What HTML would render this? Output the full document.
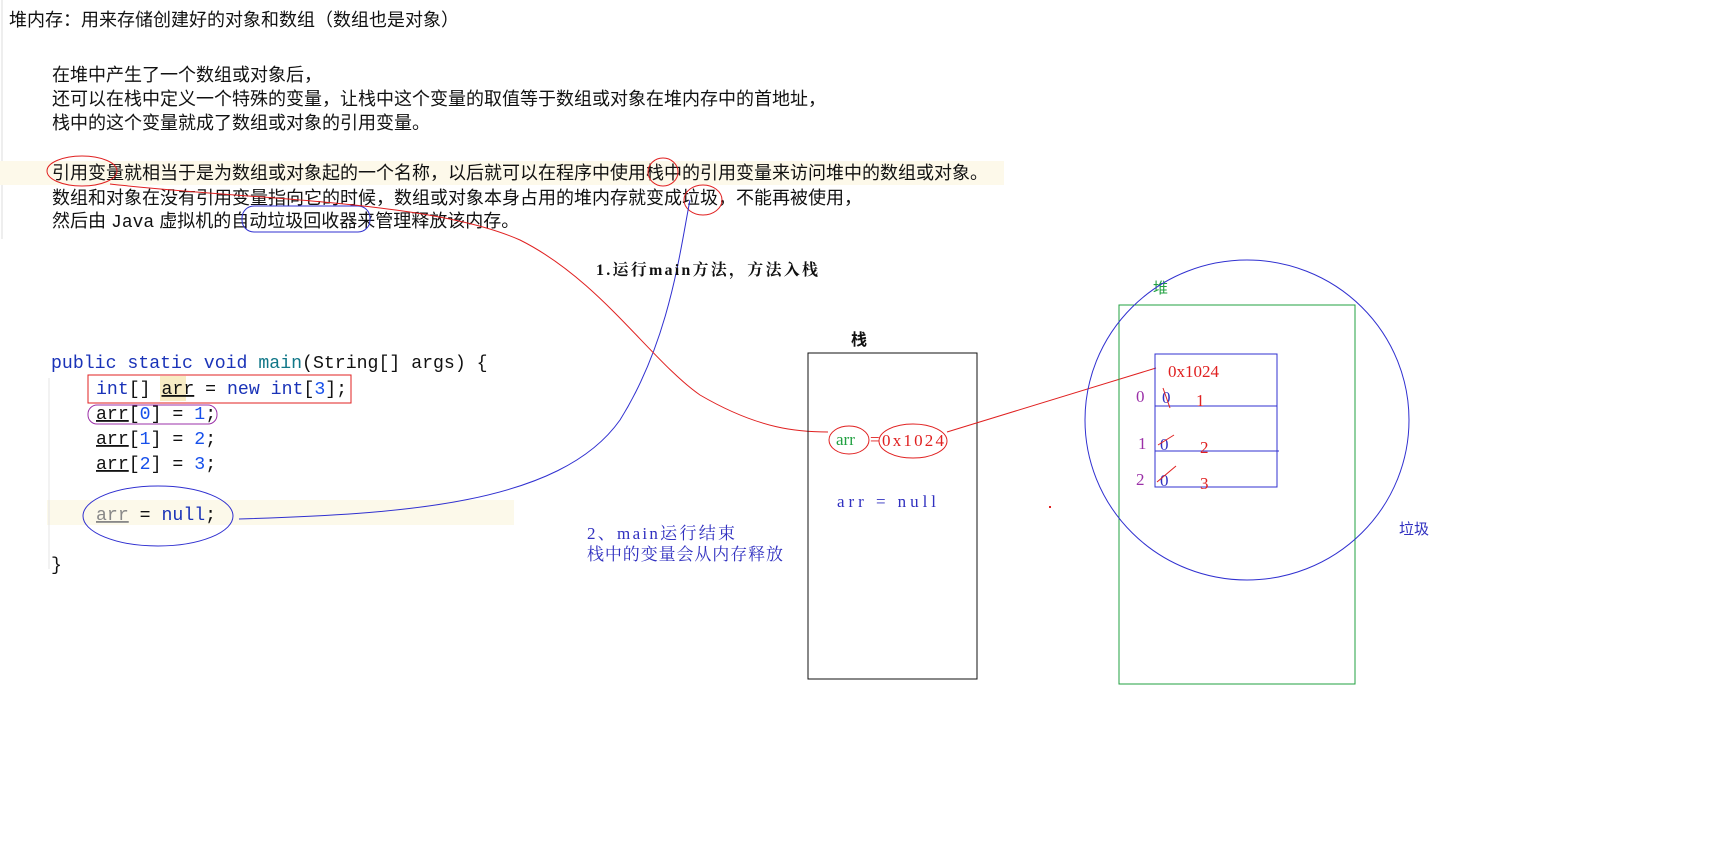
<!DOCTYPE html>
<html><head><meta charset="utf-8"><style>
html,body{margin:0;padding:0;background:#fff;width:1736px;height:851px;overflow:hidden}
svg{display:block}
.cn{font-family:"Liberation Sans","Noto Sans CJK SC",sans-serif;font-size:18px;fill:#111}
.mono{font-family:"Liberation Mono","DejaVu Sans Mono",monospace;font-size:18.2px}
.sf{font-family:"Liberation Serif","Noto Serif CJK SC",serif;font-size:17px}
</style></head><body>
<svg width="1736" height="851" viewBox="0 0 1736 851" xmlns="http://www.w3.org/2000/svg">
<line x1="2" y1="0" x2="2" y2="239" stroke="#ddd"/>
<rect x="0" y="161" width="1004" height="24" fill="#fdf9ea"/>
<text class="cn" x="9" y="26">堆内存：用来存储创建好的对象和数组（数组也是对象）</text>
<text class="cn" x="52" y="81">在堆中产生了一个数组或对象后，</text>
<text class="cn" x="52" y="105">还可以在栈中定义一个特殊的变量，让栈中这个变量的取值等于数组或对象在堆内存中的首地址，</text>
<text class="cn" x="52" y="129">栈中的这个变量就成了数组或对象的引用变量。</text>
<text class="cn" x="52" y="179">引用变量就相当于是为数组或对象起的一个名称，以后就可以在程序中使用栈中的引用变量来访问堆中的数组或对象。</text>
<text class="cn" x="52" y="204">数组和对象在没有引用变量指向它的时候，数组或对象本身占用的堆内存就变成垃圾，不能再被使用，</text>
<text class="cn" x="52" y="227">然后由 <tspan font-family="Liberation Mono,monospace">Java</tspan> 虚拟机的自动垃圾回收器来管理释放该内存。</text>
<g fill="none" stroke-width="1">
<ellipse cx="82" cy="171" rx="35" ry="15" stroke="#e02020"/>
<ellipse cx="663" cy="172" rx="15" ry="14" stroke="#e02020"/>
<ellipse cx="703" cy="200" rx="19" ry="15" stroke="#e02020"/>
<rect x="242" y="206" width="128" height="26" rx="12" stroke="#3030d0"/>
</g>
<!-- code -->
<rect x="47" y="500" width="467" height="25" fill="#fcf9ea"/>
<line x1="49" y1="378" x2="49" y2="569" stroke="#e4e4e4"/>
<rect x="160" y="376" width="26" height="25" fill="#f8ecc4"/>
<g class="mono">
<text x="51" y="368"><tspan fill="#1a33b8">public static void </tspan><tspan fill="#117788">main</tspan><tspan fill="#111">(String[] args) {</tspan></text>
<text x="96" y="394"><tspan fill="#1a33b8">int</tspan><tspan fill="#111">[] </tspan><tspan fill="#111" text-decoration="underline">arr</tspan><tspan fill="#111"> = </tspan><tspan fill="#1a33b8">new int</tspan><tspan fill="#111">[</tspan><tspan fill="#1750eb">3</tspan><tspan fill="#111">];</tspan></text>
<text x="96" y="419"><tspan fill="#111" text-decoration="underline">arr</tspan><tspan fill="#111">[</tspan><tspan fill="#1750eb">0</tspan><tspan fill="#111">] = </tspan><tspan fill="#1750eb">1</tspan><tspan fill="#111">;</tspan></text>
<text x="96" y="444"><tspan fill="#111" text-decoration="underline">arr</tspan><tspan fill="#111">[</tspan><tspan fill="#1750eb">1</tspan><tspan fill="#111">] = </tspan><tspan fill="#1750eb">2</tspan><tspan fill="#111">;</tspan></text>
<text x="96" y="469"><tspan fill="#111" text-decoration="underline">arr</tspan><tspan fill="#111">[</tspan><tspan fill="#1750eb">2</tspan><tspan fill="#111">] = </tspan><tspan fill="#1750eb">3</tspan><tspan fill="#111">;</tspan></text>
<text x="96" y="520"><tspan fill="#888" text-decoration="underline">arr</tspan><tspan fill="#111"> = </tspan><tspan fill="#1a33b8">null</tspan><tspan fill="#111">;</tspan></text>
<text x="51" y="570" fill="#111">}</text>
</g>
<g fill="none">
<rect x="88" y="375" width="263" height="28" stroke="#e02020"/>
<rect x="88" y="405" width="129" height="19" rx="9" stroke="#9b30a8"/>
<ellipse cx="158" cy="516" rx="75" ry="30" stroke="#3030d0"/>
<path d="M239 519 C400 514 560 505 620 420 C670 340 680 250 690 200" stroke="#3030d0"/>
<path d="M110 184 C250 200 430 200 520 240 C600 280 650 360 700 395 C760 430 800 432 828 432" stroke="#e02020"/>
</g>
<text x="596" y="275" font-family="Liberation Serif,Noto Serif CJK SC,serif" font-size="16" font-weight="bold" fill="#111" textLength="222">1.运行main方法，方法入栈</text>
<text x="587" y="539" font-family="Liberation Serif,Noto Serif CJK SC,serif" font-size="17" fill="#3030c0" textLength="148">2、main运行结束</text>
<text x="587" y="560" font-family="Liberation Serif,Noto Serif CJK SC,serif" font-size="17" fill="#3030c0" textLength="196">栈中的变量会从内存释放</text>
<g transform="translate(-4,-2)">
<text x="855" y="347" font-family="Noto Sans CJK SC,sans-serif" font-size="16" font-weight="bold" fill="#111">栈</text>
<rect x="812" y="355" width="169" height="326" fill="none" stroke="#111"/>
<ellipse cx="853" cy="442" rx="20" ry="14" fill="none" stroke="#e02020"/>
<ellipse cx="917" cy="443" rx="34" ry="17" fill="none" stroke="#e02020"/>
<text class="sf" x="840" y="447" fill="#20a040">arr</text>
<text class="sf" x="874" y="447" fill="#e02020">=</text>
<text class="sf" x="886" y="448" fill="#e02020" textLength="62">0x1024</text>
<text class="sf" x="841" y="509" fill="#3030c0" textLength="99">arr = null</text>
<line x1="951" y1="434" x2="1160" y2="370" stroke="#e02020"/>
<rect x="1123" y="307" width="236" height="379" fill="none" stroke="#20a040"/>
<text x="1157" y="295" font-family="Noto Sans CJK SC,sans-serif" font-size="15" fill="#20a040">堆</text>
<ellipse cx="1251" cy="422" rx="162" ry="160" fill="none" stroke="#3030d0"/>
<rect x="1159" y="356" width="122" height="133" fill="none" stroke="#3030d0"/>
<line x1="1159" y1="408" x2="1281" y2="408" stroke="#3030d0"/>
<line x1="1159" y1="453" x2="1283" y2="453" stroke="#3030d0"/>
<text class="sf" x="1172" y="379" fill="#e02020">0x1024</text>
<g class="sf" fill="#9b30a8"><text x="1140" y="404">0</text><text x="1142" y="451">1</text><text x="1140" y="487">2</text></g>
<g class="sf" fill="#3030c0"><text x="1166" y="405">0</text><text x="1164" y="452">0</text><text x="1164" y="488">0</text></g>
<g class="sf" fill="#e02020"><text x="1200" y="408">1</text><text x="1204" y="455">2</text><text x="1204" y="491">3</text></g>
<g stroke="#e02020"><line x1="1167" y1="390" x2="1174" y2="410"/><line x1="1162" y1="447" x2="1178" y2="437"/><line x1="1161" y1="484" x2="1180" y2="468"/></g>
<text x="1403" y="536" font-family="Noto Sans CJK SC,sans-serif" font-size="15" fill="#3030c0">垃圾</text>
<rect x="1053" y="508" width="2" height="2" fill="#e02020"/>
</g>
</svg>
</body></html>
